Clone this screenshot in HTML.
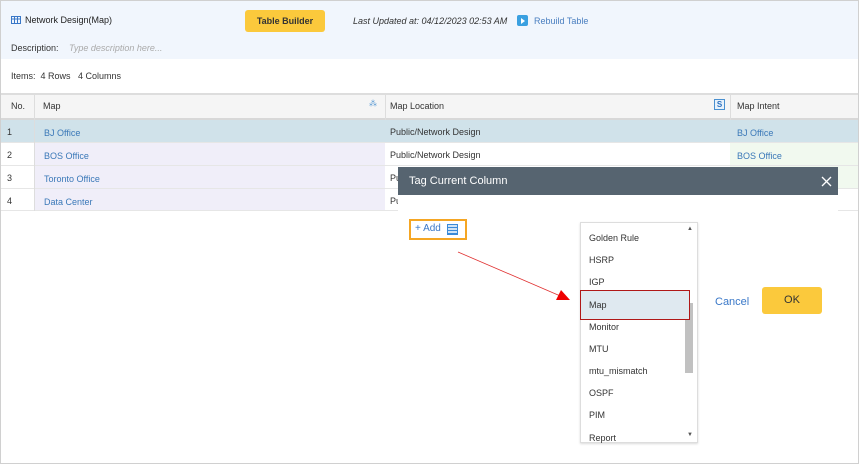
<!DOCTYPE html>
<html><head><style>
*{box-sizing:border-box;margin:0;padding:0}
body{width:859px;height:464px;overflow:hidden;background:#fff;font-family:"Liberation Sans",sans-serif;font-size:9px;color:#333;position:relative}
.a{position:absolute;white-space:nowrap}
.frame{position:absolute;left:0;top:0;width:859px;height:464px;border:1px solid #d0d0d0;pointer-events:none}
.top{position:absolute;left:1px;top:1px;width:857px;height:58px;background:#f1f6fd}
.hd{position:absolute;left:1px;top:93px;width:857px;height:27px;background:#f5f5f5;border-top:2px solid #ddd;border-bottom:2px solid #d8d8d8}
.row{position:absolute;left:1px;width:857px;height:23px;border-bottom:1px solid #e6e6e6}
.lnk{color:#3a78b8}
</style></head><body>
<div class="top"></div>
<svg class="a" style="left:11px;top:16px" width="10" height="8"><rect x="0.5" y="0.5" width="9" height="7" fill="none" stroke="#3a78c8"/><path d="M0 3H10M3.5 0V8M6.5 0V8" stroke="#3a78c8"/></svg>
<div class="a" style="left:25px;top:15px;color:#222">Network Design(Map)</div>
<div class="a" style="left:245px;top:10px;width:80px;height:22px;background:#fbc93c;border-radius:3px;text-align:center;line-height:22px;font-weight:bold;color:#333">Table Builder</div>
<div class="a" style="left:353px;top:16px;font-style:italic;color:#333">Last Updated at: 04/12/2023 02:53 AM</div>
<div class="a" style="left:517px;top:15px;width:11px;height:11px;background:#3aa0e0;border-radius:2px"></div>
<div class="a" style="left:521px;top:18px;width:0;height:0;border-left:4px solid #fff;border-top:3px solid transparent;border-bottom:3px solid transparent"></div>
<div class="a" style="left:534px;top:16px;color:#4a7fc0">Rebuild Table</div>
<div class="a" style="left:11px;top:43px;color:#333">Description:</div>
<div class="a" style="left:69px;top:43px;color:#aaa;font-style:italic">Type description here...</div>
<div class="a" style="left:11px;top:71px">Items:&nbsp; 4 Rows&nbsp;&nbsp; 4 Columns</div>
<div class="hd"></div>
<div class="row" style="top:120px;background:#d0e2ea"></div>
<div class="row" style="top:143px;background:#fff"><div class="a" style="left:33px;width:351px;height:22px;background:#f0eef9"></div><div class="a" style="left:729px;width:128px;height:22px;background:#f1f9ef"></div></div>
<div class="row" style="top:166px"><div class="a" style="left:33px;width:351px;height:22px;background:#f0eef9"></div><div class="a" style="left:729px;width:128px;height:22px;background:#f1f9ef"></div></div>
<div class="row" style="top:189px;height:22px"><div class="a" style="left:33px;width:351px;height:21px;background:#f0eef9"></div></div>
<div class="a" style="left:34px;top:95px;width:1px;height:116px;background:#ddd"></div>
<div class="a" style="left:385px;top:95px;width:1px;height:25px;background:#ddd"></div>
<div class="a" style="left:730px;top:95px;width:1px;height:25px;background:#ddd"></div>
<div class="a" style="left:11px;top:101px">No.</div>
<div class="a" style="left:43px;top:101px">Map</div>
<div class="a" style="left:369px;top:99px;color:#4a90d0;font-size:8px">⁂</div>
<div class="a" style="left:390px;top:101px">Map Location</div>
<div class="a" style="left:714px;top:99px;width:11px;height:11px;border:1px solid #4a90d0;background:#e8f2fb;color:#2a70c0;font-size:8px;text-align:center;line-height:9px;font-weight:bold">S</div>
<div class="a" style="left:737px;top:101px">Map Intent</div>

<div class="a" style="left:7px;top:127px">1</div><div class="a lnk" style="left:44px;top:128px">BJ Office</div><div class="a" style="left:390px;top:127px">Public/Network Design</div><div class="a lnk" style="left:737px;top:128px">BJ Office</div>
<div class="a" style="left:7px;top:150px">2</div><div class="a lnk" style="left:44px;top:151px">BOS Office</div><div class="a" style="left:390px;top:150px">Public/Network Design</div><div class="a lnk" style="left:737px;top:151px">BOS Office</div>
<div class="a" style="left:7px;top:173px">3</div><div class="a lnk" style="left:44px;top:174px">Toronto Office</div><div class="a" style="left:390px;top:173px">Pu</div>
<div class="a" style="left:7px;top:196px">4</div><div class="a lnk" style="left:44px;top:197px">Data Center</div><div class="a" style="left:390px;top:196px">Pu</div>

<div class="a" style="left:398px;top:167px;width:440px;height:28px;background:#566470"></div>
<div class="a" style="left:409px;top:175px;color:#fff;font-size:11px">Tag Current Column</div>
<svg class="a" style="left:821px;top:176px" width="11" height="11"><path d="M1 1L10 10M10 1L1 10" stroke="#fff" stroke-width="1.3"/></svg>
<div class="a" style="left:398px;top:195px;width:440px;height:17px;background:#fff"></div>

<div class="a" style="left:409px;top:219px;width:58px;height:21px;border:2px solid #f5a623;background:#fff"></div>
<div class="a" style="left:415px;top:223px;color:#3a78c8;font-size:10px">+ Add</div>
<div class="a" style="left:447px;top:224px;width:11px;height:11px;border:1px solid #3a8ad8;background:repeating-linear-gradient(#cfe3f6 0 2px,#3a8ad8 2px 3px)"></div>

<svg class="a" style="left:455px;top:250px" width="125" height="60"><line x1="3" y1="2" x2="110" y2="48" stroke="#e03030" stroke-width="0.8"/><polygon points="101,50 115,50 106,40" fill="#e00"/></svg>

<div class="a" style="left:580px;top:222px;width:118px;height:221px;border:1px solid #ddd;background:#fff;box-shadow:0 1px 2px rgba(0,0,0,.15)"></div>
<div class="a" style="left:685px;top:303px;width:8px;height:70px;background:#c1c1c1"></div>
<div class="a" style="left:687px;top:226px;font-size:6px;color:#555">▲</div>
<div class="a" style="left:687px;top:432px;font-size:6px;color:#555">▼</div>
<div class="a" style="left:580px;top:290px;width:110px;height:30px;border:1px solid #b01818;background:#dfe9f0"></div>
<div class="a" style="left:589px;top:233px">Golden Rule</div>
<div class="a" style="left:589px;top:255px">HSRP</div>
<div class="a" style="left:589px;top:277px">IGP</div>
<div class="a" style="left:589px;top:300px">Map</div>
<div class="a" style="left:589px;top:322px">Monitor</div>
<div class="a" style="left:589px;top:344px">MTU</div>
<div class="a" style="left:589px;top:366px">mtu_mismatch</div>
<div class="a" style="left:589px;top:388px">OSPF</div>
<div class="a" style="left:589px;top:410px">PIM</div>
<div class="a" style="left:589px;top:433px">Report</div>

<div class="a" style="left:715px;top:296px;color:#3a78c8;font-size:11px">Cancel</div>
<div class="a" style="left:762px;top:287px;width:60px;height:27px;background:#fbc93c;border-radius:3px;text-align:center;line-height:27px;font-size:11px;color:#333">OK</div>
<div class="frame"></div>
</body></html>
